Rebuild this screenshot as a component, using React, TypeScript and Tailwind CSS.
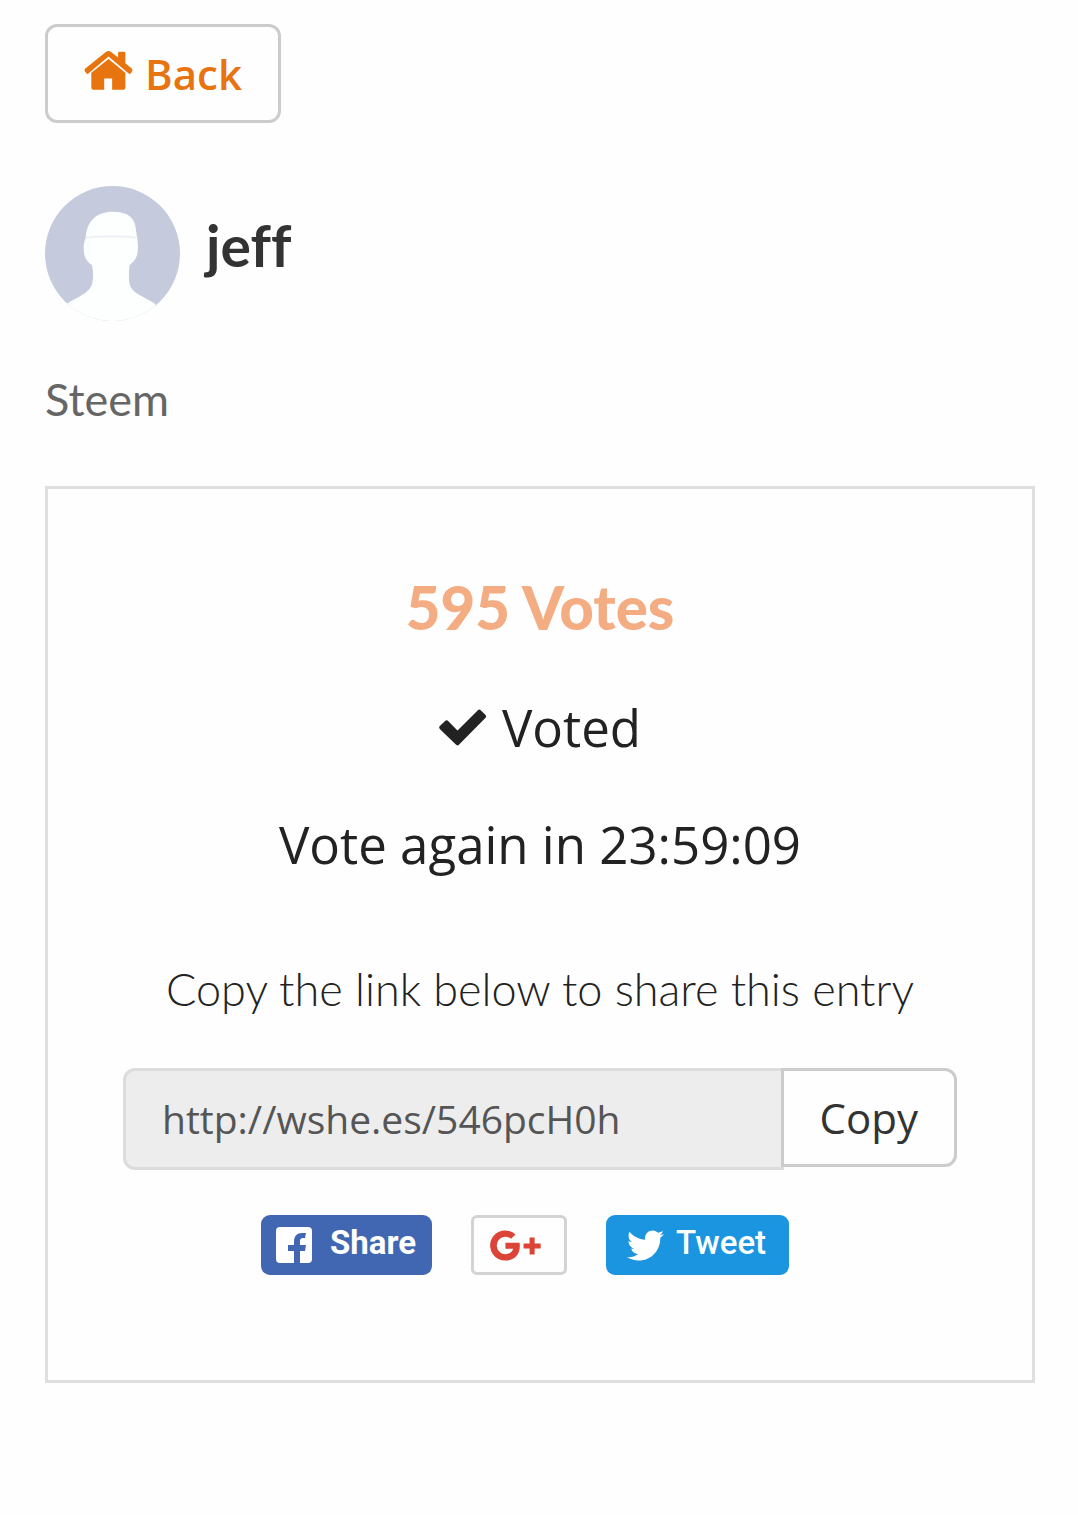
import { useRef } from "react";
import { FaTwitter } from "react-icons/fa";

const SHARE_URL = "http://wshe.es/546pcH0h";

function HomeIcon() {
    return (
        <svg viewBox="149 107 146 118" className="w-[49px] h-[39px]" fill="currentColor" aria-hidden="true">
            <path d="M222 107q4 0 8 3l21 17v-14q0-4 4-4h14q4 0 4 4v31l20 17q3 3 1 6l-5 8q-2 3-6 0l-61-51-61 51q-3 3-6 0l-5-8q-2-3 1-6l63-51q4-3 8-3z" />
            <path d="M222 131l51 42v45q0 6-6 6h-34v-34h-24v34h-33q-6 0-6-6v-45z" />
        </svg>
    );
}

function CheckIcon() {
    return (
        <svg viewBox="152 421 140 110" className="w-[47px] h-[37px]" fill="currentColor" stroke="currentColor" strokeWidth="14" strokeLinejoin="round" aria-hidden="true">
            <path d="M160 476l15-14 32 33 65-65 13 13-78 79z" />
        </svg>
    );
}

function FacebookIcon() {
    return (
        <svg viewBox="0 0 36 36" className="size-9" aria-hidden="true">
            <rect width="36" height="36" rx="4" fill="#fff" />
            <path d="M18 36V24h-6v-6h6v-3c0-6 3-9 8-9h4l-1 5h-2c-2 0-3 1-3 3v4h6l-1 6h-5v12z" fill="#4267b2" />
        </svg>
    );
}

function GooglePlusIcon() {
    return (
        <svg viewBox="90 74 152 92" className="w-[51px] h-[31px]" aria-hidden="true">
            <path
                d="M136 112h42c5 30-12 53-42 53a45 45 0 1 1 30-78l-13 13a26 26 0 1 0-17 46c12 0 20-6 23-16h-23z"
                fill="#db4437"
            />
            <path d="M208 96h15v18h18v15h-18v18h-15v-18h-18v-15h18z" fill="#db4437" />
        </svg>
    );
}

function Avatar() {
    return (
        <svg viewBox="0 0 405 405" className="size-[135px] shrink-0 rounded-full" role="img" aria-label="jeff">
            <rect width="405" height="405" fill="#c5cadd" />
            <path
                d="M204 77c44 0 68 18 69 56l3 20c4 22 4 40 0 55-4 14-14 22-22 30-3 24-3 40 0 57 8 30 45 37 77 59v51H65v-51c30-20 70-32 77-63 3-18 3-34-1-53-11-8-20-18-23-32-3-17-3-33 4-50 3-52 33-79 82-79z"
                fill="#fdfefe"
            />
            <path d="M122 155q75-8 151 0" fill="none" stroke="#eef0f6" strokeWidth="5" />
        </svg>
    );
}

export default function App() {
    const inputRef = useRef<HTMLInputElement>(null);

    function copyLink() {
        inputRef.current?.select();
        navigator.clipboard?.writeText(SHARE_URL);
    }

    return (
        <main className="min-h-screen bg-[#fefefe] pt-6 pb-[132px] pl-[45px] pr-[43px] font-['Open_Sans',sans-serif] text-[#222]">
            <button
                type="button"
                className="flex h-[99px] items-center gap-3 rounded-xl border-3 border-[#ccc] px-9 text-[42px] font-semibold text-[#e7740f]"
            >
                <span className="pb-1.5">
                    <HomeIcon />
                </span>
                Back
            </button>

            <div className="mt-[63px] flex items-center gap-[26px]">
                <Avatar />
                <h1 className="pb-[18px] font-['Lato',sans-serif] text-[57px] leading-[60px] font-bold text-[#333] [font-variant-ligatures:none]">jeff</h1>
            </div>

            <p className="mt-[48px] font-['Futura','Lato',sans-serif] text-[45px] leading-[60px] text-[#666]">Steem</p>

            <section className="mt-[57px] border-3 border-[#dfdfdf] px-[75px] pt-[88px] pb-[105px] text-center">
                <h2 className="font-['Futura','Lato',sans-serif] text-[60px] leading-[60px] font-black text-[#f4ad82]">595 Votes</h2>

                <p className="mt-[54px] flex items-center justify-center gap-4 text-[51px] leading-[72px]">
                    <CheckIcon />
                    Voted
                </p>
                <p className="mt-[45px] text-[51px] leading-[72px]">Vote again in 23:59:09</p>

                <label htmlFor="share-link" className="mt-[79px] block font-['Futura','Lato',sans-serif] text-[45px] leading-[60px] font-light whitespace-nowrap">
                    Copy the link below to share this entry
                </label>

                <div className="mt-[49px] flex items-start">
                    <input
                        id="share-link"
                        ref={inputRef}
                        type="text"
                        readOnly
                        value={SHARE_URL}
                        className="h-[102px] min-w-0 flex-1 rounded-l-xl border-3 border-[#dcdcdc] bg-[#ededed] px-9 pb-0.5 text-[39px] text-[#555] outline-none"
                    />
                    <button
                        type="button"
                        onClick={copyLink}
                        className="-ml-[3px] h-[99px] rounded-r-xl border-3 border-[#ccc] bg-[#fefefe] px-9 text-[42px] text-[#333]"
                    >
                        Copy
                    </button>
                </div>

                <div className="mt-[45px] flex justify-center gap-[39px] pr-[30px] font-['Roboto',sans-serif] text-[33px]">
                    <a href="#facebook" className="flex h-[60px] items-center gap-[18px] rounded-[9px] bg-[#4267b2] pr-4 pl-[15px] font-bold text-white">
                        <FacebookIcon />
                        <span className="pb-1">Share</span>
                    </a>
                    <a href="#google-plus" aria-label="Google+" className="flex h-[60px] w-24 items-center rounded-md border-3 border-[#d3d3d3] pl-4">
                        <GooglePlusIcon />
                    </a>
                    <a href="#twitter" className="flex h-[60px] items-center gap-3 rounded-[9px] bg-[#1b95e0] pr-[23px] pl-[21px] font-medium text-white">
                        <FaTwitter size={37} aria-hidden="true" />
                        <span className="pb-1">Tweet</span>
                    </a>
                </div>
            </section>
        </main>
    );
}
